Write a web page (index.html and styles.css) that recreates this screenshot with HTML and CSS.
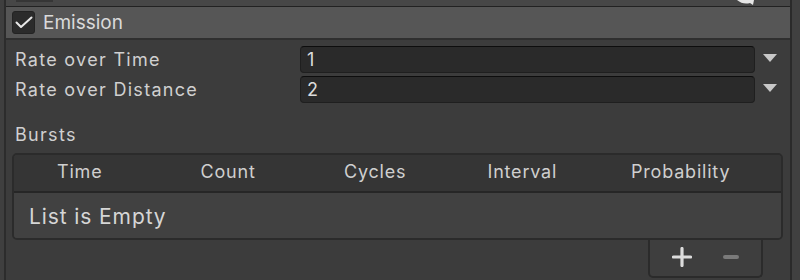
FILE: index.html
```html
<!DOCTYPE html>
<html>
<head>
<meta charset="utf-8">
<link rel="stylesheet" href="styles.css">
</head>
<body>
<div class="page">
  <div class="gutter"></div>
  <div class="main">
    <div class="topstrip">
      <div class="topbox"></div>
      <svg class="search" width="20" height="6" viewBox="0 0 20 6"><path d="M1 0 Q7 5 14 3 L17 5 L18 0 Z" fill="#e6e6e6"/></svg>
    </div>
    <div class="header">
      <div class="checkbox">
        <svg width="23" height="23" viewBox="0 0 23 23"><path d="M4.5 11.5 L9 16 L19.5 6.5" fill="none" stroke="#e8e8e8" stroke-width="2" stroke-linecap="round" stroke-linejoin="round"/></svg>
      </div>
      <span class="title">Emission</span>
    </div>
    <div class="body">
      <div class="row">
        <span class="label">Rate over Time</span>
        <div class="field">1</div>
        <svg class="tri" width="14" height="9" viewBox="0 0 14 9"><path d="M0 0 H14 L7 8 Z" fill="#c8c8c8"/></svg>
      </div>
      <div class="row">
        <span class="label">Rate over Distance</span>
        <div class="field">2</div>
        <svg class="tri" width="14" height="9" viewBox="0 0 14 9"><path d="M0 0 H14 L7 8 Z" fill="#c8c8c8"/></svg>
      </div>
      <div class="bursts">Bursts</div>
      <div class="table">
        <div class="thead">
          <span>Time</span><span>Count</span><span>Cycles</span><span>Interval</span><span>Probability</span>
        </div>
        <div class="tbody">List is Empty</div>
      </div>
      <div class="footer">
        <div class="tab">
          <svg width="20" height="20" viewBox="0 0 20 20"><path d="M10 1.5 V18.5 M1.5 10 H18.5" stroke="#dcdcdc" stroke-width="3.2" stroke-linecap="round"/></svg>
          <span class="minus"></span>
        </div>
      </div>
    </div>
  </div>
  <div class="rightedge"></div>
</div>
</body>
</html>
```
FILE: styles.css
```css
html, body {
  margin: 0;
  padding: 0;
  background: #383838;
  width: 800px;
  height: 280px;
  overflow: hidden;
  font-family: Inter, "Noto Sans", sans-serif;
  color: #d2d2d2;
}
.page {
  display: flex;
  height: 280px;
}
.gutter {
  width: 4px;
  background: #3f3f3f;
  border-right: 2px solid #2c2c2c;
}
.main {
  width: 784px;
  display: flex;
  flex-direction: column;
  background: #3c3c3c;
}
.rightedge {
  width: 8px;
  border-left: 2px solid #2a2a2a;
  background: #404040;
}
.topstrip {
  height: 6px;
  background: #474747;
  border-bottom: 1px solid #222;
  position: relative;
}
.topbox {
  position: absolute;
  left: 10px;
  top: 0;
  width: 37px;
  height: 2px;
  background: #363636;
}
.search {
  position: absolute;
  left: 730px;
  top: 0;
}
.header {
  height: 31px;
  background: #565656;
  border-bottom: 2px solid #2f2f2f;
  display: flex;
  align-items: center;
  padding-left: 6px;
  gap: 8px;
}
.checkbox {
  width: 23px;
  height: 23px;
  box-sizing: border-box;
  background: #2b2b2b;
  border: 1px solid #232323;
  border-radius: 3px;
  display: flex;
  align-items: center;
  justify-content: center;
}
.checkbox svg {
  flex: none;
}
.title {
  font-size: 19px;
  color: #dadada;
}
.body {
  padding: 6px 0 0 9px;
  display: flex;
  flex-direction: column;
}
.row {
  display: flex;
  align-items: center;
  height: 27px;
  margin-bottom: 3px;
}
.label {
  width: 285px;
  font-size: 18px;
  letter-spacing: 1.3px;
  color: #d0d0d0;
}
.field {
  width: 455px;
  height: 27px;
  box-sizing: border-box;
  background: #2a2a2a;
  border: 1px solid #1f1f1f;
  border-top-color: #0d0d0d;
  border-radius: 4px;
  font-size: 18px;
  padding-left: 6px;
  line-height: 25px;
  color: #dcdcdc;
}
.tri {
  margin-left: 8px;
  margin-top: -2px;
}
.bursts {
  margin-top: 18px;
  font-size: 18px;
  letter-spacing: 1.3px;
  height: 22px;
  line-height: 22px;
  color: #d0d0d0;
}
.table {
  margin-top: 7px;
  margin-left: -3px;
  width: 771px;
  box-sizing: border-box;
  border: 2px solid #2b2b2b;
  border-radius: 5px;
  overflow: hidden;
}
.thead {
  height: 36px;
  line-height: 34px;
  background: #353535;
  border-bottom: 2px solid #262626;
  display: grid;
  grid-template-columns: repeat(5, 143.5px);
  padding-left: 43px;
  font-size: 18px;
  letter-spacing: 0.8px;
  color: #cfcfcf;
}
.tbody {
  height: 45px;
  background: #414141;
  font-size: 21px;
  letter-spacing: 0.9px;
  padding-left: 15px;
  line-height: 47px;
  color: #d6d6d6;
}
.footer {
  display: flex;
  justify-content: flex-end;
  padding-right: 27px;
}
.tab {
  width: 115px;
  height: 38px;
  box-sizing: border-box;
  border: 2px solid #2b2b2b;
  border-top: none;
  border-radius: 0 0 5px 5px;
  background: #3e3e3e;
  display: flex;
  align-items: center;
  justify-content: center;
  gap: 31px;
  padding-bottom: 2px;
}
.minus {
  width: 16px;
  height: 4px;
  border-radius: 2px;
  background: #7a7a7a;
}
```
